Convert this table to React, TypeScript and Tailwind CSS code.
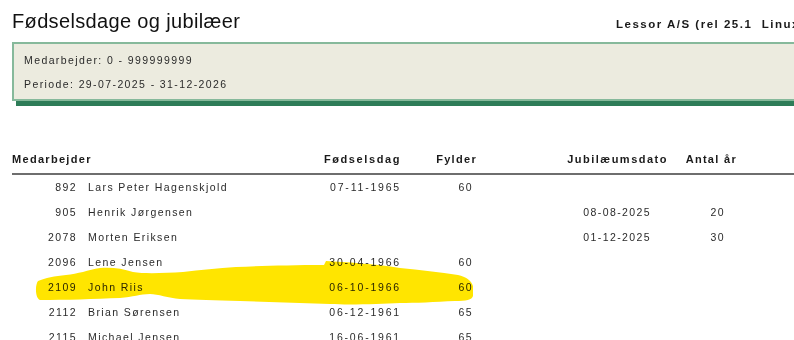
import React from "react";

type Row = {
  nr: string;
  name: string;
  birthday?: string;
  turns?: string;
  jubilee?: string;
  years?: string;
};

const rows: Row[] = [
  { nr: "892", name: "Lars Peter Hagenskjold", birthday: "07-11-1965", turns: "60" },
  { nr: "905", name: "Henrik Jørgensen", jubilee: "08-08-2025", years: "20" },
  { nr: "2078", name: "Morten Eriksen", jubilee: "01-12-2025", years: "30" },
  { nr: "2096", name: "Lene Jensen", birthday: "30-04-1966", turns: "60" },
  { nr: "2109", name: "John Riis", birthday: "06-10-1966", turns: "60" },
  { nr: "2112", name: "Brian Sørensen", birthday: "06-12-1961", turns: "65" },
  { nr: "2115", name: "Michael Jensen", birthday: "16-06-1961", turns: "65" },
];

// Hand-drawn marker stroke over one row
const markerPath =
  "M 38 281 C 45 278, 55 276, 66 275 C 78 274, 88 270, 100 268 C 110 267, 122 268, 133 272 " +
  "C 145 274, 165 273, 183 272 C 200 270, 218 268, 236 267 C 260 266, 290 265, 324 265 " +
  "L 326 261 C 345 262, 375 264, 400 268 C 420 270, 440 272, 458 275 C 466 277, 471 280, 473 286 " +
  "L 473 296 C 472 300, 466 301, 455 301 C 435 302, 415 303, 400 303 C 380 304, 350 305, 330 304 " +
  "C 300 303, 270 302, 240 301 C 215 300, 195 300, 180 299 C 168 298, 158 294, 150 294 " +
  "C 140 294, 133 297, 120 298 C 95 299, 65 300, 40 300 C 35 298, 35 285, 38 281 Z";

export default function App() {
  return (
    <div className="relative isolate w-[794px] h-[340px] overflow-hidden bg-white font-['Liberation_Sans',Arial,sans-serif]">
      <div className="w-[900px] pl-[12px]">
        {/* Report title */}
        <div className="flex items-baseline pt-[9px] h-[33px]">
          <div className="w-[604px] text-[20px] leading-[24px] tracking-[0.35px] text-[#111]">
            Fødselsdage og jubilæer
          </div>
          <div className="whitespace-pre text-[11.5px] leading-[24px] font-bold tracking-[1.5px] text-[#1a1a1a]">
            {"Lessor A/S (rel 25.1  Linux)"}
          </div>
        </div>

        {/* Selection criteria */}
        <div className="mt-[9px] w-[888px] border-2 border-[#86b99b] bg-[#ecebdf] shadow-[4px_5px_0_0_#2e7c58] pl-[10px] pt-[4px] pb-[3px] text-[10.5px] leading-[24px] tracking-[1.4px] text-[#2a2a2a]">
          <div>Medarbejder: 0 - 999999999</div>
          <div>Periode: 29-07-2025 - 31-12-2026</div>
        </div>

        {/* Column headings */}
        <div className="mt-[48px] flex h-[20px] text-[11px] leading-[20px] font-bold tracking-[1.3px] text-[#1a1a1a] whitespace-nowrap">
          <div className="w-[276px]">Medarbejder</div>
          <div className="w-[113px] text-right tracking-[1.6px]">Fødselsdag</div>
          <div className="w-[76px] text-right">Fylder</div>
          <div className="w-[191px] text-right tracking-[1.5px]">Jubilæumsdato</div>
          <div className="w-[69px] text-right">Antal år</div>
        </div>
        <div className="mt-[4px] h-[2px] w-[888px] bg-[#6e6e6e]" />

        {/* Rows */}
        <div className="text-[10.5px] tracking-[1.4px] text-[#2a2a2a]">
          {rows.map((r) => (
            <div key={r.nr} className="flex h-[25px] leading-[25px] whitespace-nowrap">
              <div className="w-[65px] text-right">{r.nr}</div>
              <div className="ml-[11px] w-[200px]">{r.name}</div>
              <div className="w-[113px] text-right tracking-[1.8px]">{r.birthday ?? ""}</div>
              <div className="w-[72px] text-right">{r.turns ?? ""}</div>
              <div className="w-[178px] text-right">{r.jubilee ?? ""}</div>
              <div className="w-[74px] text-right">{r.years ?? ""}</div>
            </div>
          ))}
        </div>
      </div>

      <svg
        className="pointer-events-none absolute left-0 top-0 mix-blend-multiply"
        width="794"
        height="340"
        viewBox="0 0 794 340"
      >
        <path d={markerPath} fill="#ffe500" />
      </svg>
    </div>
  );
}
